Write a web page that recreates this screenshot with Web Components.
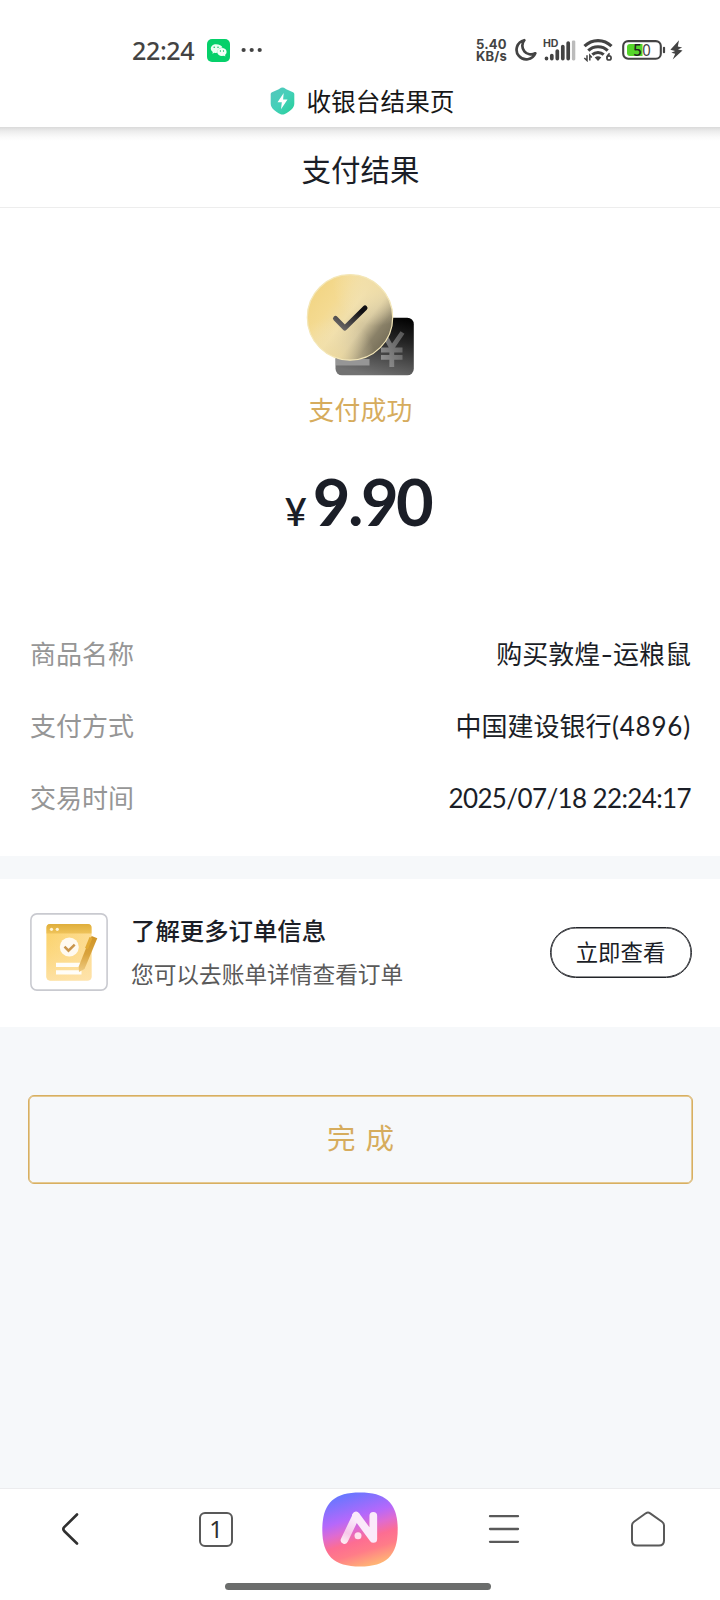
<!DOCTYPE html>
<html lang="zh-CN">
<head>
<meta charset="utf-8">
<title>支付结果</title>
<style>
body{margin:0;background:#f6f8fa;color:#1b1e27;font-family:Lato,"Noto Sans CJK SC",sans-serif}
</style>
</head>
<body>
<pay-screen></pay-screen>
<script>
const define = (name, html) => {
  const t = document.createElement('template');
  t.innerHTML = html;
  customElements.define(name, class extends HTMLElement {
    constructor() {
      super();
      this.attachShadow({ mode: 'open' }).appendChild(t.content.cloneNode(true));
    }
  });
};

define('status-bar', `
<style>
:host{display:flex;align-items:center;height:76px;padding:24px 37px 0 132px;box-sizing:border-box;color:#434343}
svg{display:block;flex:none}
.time{font:500 25px/30px "Noto Sans",sans-serif;width:75px;letter-spacing:-.35px;white-space:nowrap}
.dots{margin-left:11px}
.right{margin-left:auto;display:flex;align-items:center}
.speed{font:700 13px/12.5px Inter,sans-serif;width:38px;letter-spacing:.2px;white-space:nowrap}
.b{font-family:"Noto Sans",sans-serif}
</style>
<span class="time">22:24</span>
<svg width="23" height="23" viewBox="0 0 23 23"><rect width="23" height="23" rx="5" fill="#05d06a"/><path d="M9 5.2c-3 0-5.2 2-5.2 4.400 0 1.400.8 2.600 2 3.400l-.4 1.700 2-1c1 .3 2 .3 3.100.1-.4-3 2-5 5-5C15 6.600 12.200 5.200 9 5.200z" fill="#e9fff2"/><ellipse cx="14.900" cy="12.900" rx="4.700" ry="4" fill="#f4fff8"/><path d="M16 16l2.300 1.500-.3-2.200z" fill="#f4fff8"/><g fill="#05b95d"><circle cx="7.200" cy="8.300" r=".75"/><circle cx="11" cy="8.300" r=".75"/><circle cx="13.400" cy="12" r=".65"/><circle cx="16.500" cy="12" r=".65"/></g></svg>
<svg class="dots" width="22" height="6" viewBox="0 0 22 6" fill="#434343"><circle cx="2.600" cy="3" r="2.100"/><circle cx="10.700" cy="3" r="2.100"/><circle cx="18.700" cy="3" r="2.100"/></svg>
<div class="right">
<div class="speed">5.40<br>KB/s</div>
<svg width="22" height="24" viewBox="0 0 22 24" style="margin-left:1px"><path d="M9.300 2.200A9.700 9.700 0 1 0 20.300 15.300A8.700 8.700 0 0 1 9.300 2.200Z" fill="none" stroke="#434343" stroke-width="2.700" stroke-linejoin="round"/></svg>
<svg width="34" height="24" viewBox="0 0 34 24" style="margin-left:6px"><text x="0" y="9.300" font-family="Inter,sans-serif" font-weight="700" font-size="9.800" fill="#434343" textLength="15.500" lengthAdjust="spacingAndGlyphs">HD</text><g stroke="#434343" stroke-width="3.700" stroke-linecap="round"><path d="M4 20.300v.3M9.300 17.500v3.100M14.800 13v7.600M20.300 8.500v12.100M25.700 5v15.600" transform="translate(-.5 0)"/></g><rect x="28.900" y="2.500" width="3.400" height="19.900" rx="1.300" fill="#bbb"/></svg>
<svg width="30" height="24" viewBox="0 0 30 24" style="margin-left:6px" fill="none" stroke="#434343"><path d="M1.500 8.200C9 .7 21 .7 28.500 8.200" stroke-width="3.100"/><path d="M5.300 12.600C10.500 7.400 19.500 7.400 24.700 12.600" stroke-width="3.100"/><path d="M9.300 16.700C12.500 13.700 17.500 13.700 20.700 16.700" stroke-width="3"/><path d="M11.700 19.500Q15 16.900 18.300 19.500L15 22.900Z" fill="#434343" stroke="none"/><path d="M4 17.200v5.300L1.300 20M6.800 22.500v-5.300l2 2.300" stroke-width="1.500"/><circle cx="26" cy="19.900" r="2.100" stroke-width="1.700"/><path d="M24 19.400Q24.300 17.200 26.600 15.300" stroke-width="1.700"/></svg>
<svg width="44" height="24" viewBox="0 0 44 24" style="margin-left:9px"><rect x="1.200" y="3.100" width="37.600" height="17.600" rx="5" fill="#fff" stroke="#434343" stroke-width="2.100"/><path d="M8 6h12.500v12H8a3 3 0 0 1-3-3V9a3 3 0 0 1 3-3z" fill="#55d42b"/><path d="M42 9.800v4.400" stroke="#434343" stroke-width="2.200" stroke-linecap="round"/><text class="b" x="11.200" y="17.600" font-size="15.500" font-weight="500" fill="#222" textLength="8.500" lengthAdjust="spacingAndGlyphs">5</text><text class="b" x="20.300" y="17.600" font-size="15.500" fill="#434343" textLength="8.500" lengthAdjust="spacingAndGlyphs">0</text></svg>
<svg width="13" height="20" viewBox="0 0 13 20" style="margin-left:4px"><path d="M9 .2L.4 9.700l4.700 1.200L1.400 12.700l3.800 1.100-2.500 5.800L12.500 10.600l-4.500-1 4.100-2.200-4.300-.9z" fill="#434343"/></svg>
</div>`);

define('browser-title', `
<style>
:host{display:flex;justify-content:center;align-items:center;height:51px;box-sizing:border-box;gap:11px;font-size:24.700px;line-height:30px;color:#171717;margin-left:5px}
svg{display:block;margin-top:-1px}
</style>
<svg width="25" height="28" viewBox="0 0 25 28"><defs><linearGradient id="g" x1="0" x2="1" y1="0" y2="1"><stop stop-color="#55c6bd"/><stop offset=".5" stop-color="#44d0b9"/><stop offset="1" stop-color="#24cf96"/></linearGradient></defs><path d="M11 .8Q12.500 0 14 .8C17 2.800 20 4.300 23 5.200Q24.300 5.700 24.300 7V16.500C24.300 21 20 24.500 14.300 27.200Q12.500 28 10.700 27.200C5 24.500.7 21 .7 16.500V7Q.7 5.700 2 5.200C5 4.300 8 2.800 11 .8Z" fill="url(#g)"/><path d="M13.700 5.900L7.500 15.300h4.300l-.8 6.900 6.500-9.600h-4.400z" fill="#fff"/></svg>
<slot></slot>`);

define('page-title', `
<style>
:host{display:flex;justify-content:center;align-items:center;height:81px;box-sizing:border-box;padding:2px 0 0 1px;border-bottom:1px solid #ededed;font-size:29.500px;color:#1b1e27;background:linear-gradient(#dadada,#ececec 4px,#fafafa 10px,#fff 14px)}
</style><slot></slot>`);

define('success-art', `
<style>:host{display:block;width:110px;height:106px}svg{display:block}</style>
<svg width="110" height="106" viewBox="0 0 110 106">
<defs>
<linearGradient id="card" x1=".75" y1="0" x2=".45" y2="1"><stop stop-color="#050505"/><stop offset=".35" stop-color="#242424"/><stop offset="1" stop-color="#727272"/></linearGradient>
<linearGradient id="gold" x1="0" y1=".1" x2="1" y2=".85"><stop stop-color="#f1d37f"/><stop offset=".3" stop-color="#f4da91"/><stop offset=".48" stop-color="#f1dfaa"/><stop offset=".66" stop-color="#d3c59d"/><stop offset=".8" stop-color="#8a8168"/><stop offset="1" stop-color="#6a634f"/></linearGradient>
<radialGradient id="sheen" cx=".3" cy="1" r=".5"><stop stop-color="#f0db9e" stop-opacity=".9"/><stop offset="1" stop-color="#f5e7bd" stop-opacity="0"/></radialGradient>
<radialGradient id="top" cx=".8" cy=".1" r=".5"><stop stop-color="#f0dda6"/><stop offset="1" stop-color="#f5e7bd" stop-opacity="0"/></radialGradient>
<linearGradient id="tick" x1="1" y1="0" x2="0" y2="1"><stop offset=".15" stop-color="#100f12"/><stop offset="1" stop-color="#74706f"/></linearGradient>
<linearGradient id="yen" x1="1" y1="0" x2="0" y2="1"><stop stop-color="#585858"/><stop offset="1" stop-color="#979797"/></linearGradient>
</defs>
<rect x="29.500" y="44.700" width="78.300" height="57.600" rx="6.500" fill="url(#card)"/>
<path d="M30 86h33.500v6.500H30z" fill="#969696"/>
<path d="M77 59.500L85.800 75L96.500 59.500M85.800 75v19M75 77h21.500M75 84.300h21.500" stroke="url(#yen)" stroke-width="4.800" fill="none"/>
<g><circle cx="44" cy="44.400" r="42.900" fill="url(#gold)"/><circle cx="44" cy="44.400" r="42.900" fill="url(#sheen)"/><circle cx="44" cy="44.400" r="42.900" fill="url(#top)"/></g>
<circle cx="44" cy="44.400" r="42.700" fill="none" stroke="#f4e7b8" stroke-width="1.200"/>
<path d="M29.500 45.500L38.800 55L59 35" fill="none" stroke="url(#tick)" stroke-width="5" stroke-linecap="round" stroke-linejoin="round"/>
</svg>`);

define('pay-result', `
<style>
:host{display:flex;flex-direction:column;align-items:center;height:410px;box-sizing:border-box;padding-top:65px;background:#fff}
success-art{margin-left:2px}
.state{font-size:25.800px;line-height:36px;color:#d6ac5d;margin-top:13px;letter-spacing:.2px;margin-left:1px}
.amount{display:flex;align-items:baseline;margin-top:33px;line-height:80px;height:80px;font-weight:700;color:#1b1e27;margin-right:7px}
.yen{font-size:38px;font-weight:600;margin-right:6px}
.num{font-size:65px;letter-spacing:-2.500px;margin-right:-3px}
</style>
<success-art></success-art>
<div class="state"><slot name="state"></slot></div>
<div class="amount"><span class="yen">¥</span><span class="num"><slot></slot></span></div>`);

define('info-row', `
<style>
:host{display:flex;justify-content:space-between;align-items:center;height:71.700px;padding:0 29px 0 30px;font-size:26px;line-height:36px;color:#1b1e27}
.label{color:#969696}
</style>
<span class="label"><slot name="label"></slot></span><span><slot></slot></span>`);

define('info-list', `
<style>:host{display:block;height:238px;box-sizing:border-box;background:#fff}
::slotted(info-row.date){letter-spacing:-.62px;padding-top:1px}
</style><slot></slot>`);

define('wide-run', `
<style>:host{letter-spacing:.8px;margin-left:-7px}:host([dash]){display:inline-block;transform:scaleX(1.300);margin:0 1.500px;letter-spacing:0}</style><slot></slot>`);

define('order-card', `
<style>
:host{display:flex;align-items:flex-start;height:148px;box-sizing:border-box;padding:34px 28px 0 30px;margin-top:23px;background:#fff}
.box{flex:none;width:78px;height:78px}
svg{display:block}
.txt{margin-left:23px}
.t{font-size:24.400px;line-height:36px;font-weight:500;color:#1b1e27}
.s{font-size:22.700px;line-height:34px;margin-top:9px;color:#5a5a5a}
.btn{margin:14px 0 0 auto;width:142px;height:51px;box-sizing:border-box;border:1px solid #222429;box-shadow:inset 0 0 0 .6px #222429;border-radius:26px;display:flex;align-items:center;justify-content:center;font-size:22.400px;line-height:30px;padding:0 1px 0 0}
</style>
<svg class="box" width="78" height="78" viewBox="0 0 78 78">
<defs><linearGradient id="p" x1="0" y1="0" x2="1" y2=".1"><stop stop-color="#fbd269"/><stop offset="1" stop-color="#fee1a6"/></linearGradient>
<linearGradient id="f" x1="0" y1="0" x2="0" y2="1"><stop stop-color="#fbd269" stop-opacity=".3"/><stop offset="1" stop-color="#fee3ac" stop-opacity=".85"/></linearGradient>
<linearGradient id="h" x1="0" y1="0" x2="0" y2="1"><stop stop-color="#dfae3b"/><stop offset="1" stop-color="#efc35a"/></linearGradient>
<linearGradient id="n" x1="0" y1="0" x2="0" y2="1"><stop stop-color="#cf9427"/><stop offset=".5" stop-color="#d9a33c"/><stop offset="1" stop-color="#efcb82"/></linearGradient></defs>
<rect x=".9" y=".9" width="76.200" height="76.200" rx="6" fill="#fff" stroke="#c9cad0" stroke-width="1.600"/>
<rect x="16.500" y="11" width="45" height="56.500" rx="4" fill="url(#p)"/><rect x="16.500" y="11" width="45" height="56.500" rx="4" fill="url(#f)"/>
<path d="M16.500 20.500V14.500a3.500 3.500 0 0 1 3.500-3.500h38a3.500 3.500 0 0 1 3.500 3.500V20.500z" fill="url(#h)"/>
<circle cx="21.500" cy="16.300" r="1.600" fill="#fff4d5"/><circle cx="27.300" cy="16.300" r="1.600" fill="#fff4d5"/>
<circle cx="39.300" cy="34" r="9.500" fill="#fffaf0"/><path d="M34.500 33.700l4 4 6.200-6" fill="none" stroke="#c9954c" stroke-width="2.500"/>
<path d="M26 49.700h26v4.200H26zM26 57.200h25.500v4.200H26z" fill="#fffdf8"/>
<path d="M61.700 23l5.600 2.200L54.500 56l-5.500 3-.3-5.500 7-17.500z" fill="url(#n)"/><path d="M61 24.500l-4.500 11" stroke="#e2aa35" stroke-width="3.200"/>
</svg>
<div class="txt"><div class="t"><slot name="title"></slot></div><div class="s"><slot></slot></div></div>
<div class="btn"><slot name="action"></slot></div>`);

define('done-button', `
<style>:host{display:flex;align-items:center;justify-content:center;height:89px;box-sizing:border-box;margin:68px 27px 0 28px;border:1px solid #d8af61;box-shadow:inset 0 0 0 .7px #dfb96f;border-radius:6px;padding-bottom:6px;font-size:28.500px;color:#d6ac5d;letter-spacing:10px;text-indent:10px}</style><slot></slot>`);

define('bottom-nav', `
<style>
:host{display:grid;grid-template-rows:82px 30px;height:112px;box-sizing:border-box;border-top:1px solid #ececee;background:#fff}
.tabs{display:grid;grid-template-columns:repeat(5,1fr);align-items:center;justify-items:center;height:80px;box-sizing:border-box}
svg{display:block}
.one{width:34px;height:35px;box-sizing:border-box;border:2px solid #595959;border-radius:6px;font:400 24px/30px "Noto Sans",sans-serif;text-align:center;color:#303030}
.bar{width:266px;height:7px;border-radius:4px;background:#6b6d6c;justify-self:center;margin:12px 4px 0 0}
</style>
<div class="tabs">
<svg width="20" height="34" viewBox="0 0 20 34" style="margin-right:4px"><path d="M17 2.500L4.200 15.200Q2.500 17 4.200 19L17 31.500" fill="none" stroke="#303030" stroke-width="2.600" stroke-linecap="round"/></svg>
<div class="one">1</div>
<svg width="76" height="75" viewBox="0 0 76 75"><defs>
<linearGradient id="a" x1=".28" y1="0" x2=".6" y2="1"><stop offset=".02" stop-color="#6677ff"/><stop offset=".35" stop-color="#b568fb"/><stop offset=".5" stop-color="#df6bd0"/><stop offset=".65" stop-color="#fd6d92"/><stop offset=".8" stop-color="#ff7c88"/><stop offset="1" stop-color="#ffb475"/></linearGradient>
<linearGradient id="l" gradientUnits="userSpaceOnUse" x1="36" y1="22" x2="22" y2="50"><stop offset=".2" stop-color="#fbeafa"/><stop offset=".7" stop-color="#fbd9ef" stop-opacity=".85"/><stop offset="1" stop-color="#fff" stop-opacity=".85"/></linearGradient></defs>
<path d="M38 .5C64 .5 75.700 11 75.700 37.500S64 74.500 38 74.500S.3 64 .3 37.500S12 .5 38 .5Z" fill="url(#a)"/>
<path d="M22.500 48L34 24" stroke="url(#l)" stroke-width="7.500" stroke-linecap="round" fill="none"/>
<path d="M51.300 23.800V47L34 23.500" stroke="#fbeafa" stroke-width="7.700" stroke-linecap="round" stroke-linejoin="round" fill="none"/>
<circle cx="36" cy="43.800" r="3.500" fill="#ffe1ed"/></svg>
<svg width="32" height="30" viewBox="0 0 32 30"><path d="M2 2.200h28M2 15h28M2 27.800h28" stroke="#595959" stroke-width="2.300" stroke-linecap="round"/></svg>
<svg width="34" height="36" viewBox="0 0 34 36"><path d="M14.800 2.300Q17 .8 19.200 2.300L31 10.700Q33 12.200 33 14.200V29.500Q33 34.500 28 34.500H6Q1 34.500 1 29.500V14.200Q1 12.200 3 10.700Z" fill="none" stroke="#595959" stroke-width="2"/></svg>
</div>
<div class="bar"></div>`);

define('pay-screen', `
<style>
:host{display:flex;flex-direction:column;width:720px;height:1600px;background:#f6f8fa;overflow:hidden}
.top{background:#fff}
bottom-nav{margin-top:auto}
</style>
<div class="top"><status-bar></status-bar><browser-title>收银台结果页</browser-title></div>
<page-title>支付结果</page-title>
<pay-result><span slot="state">支付成功</span>9.90</pay-result>
<info-list>
<info-row><span slot="label">商品名称</span>购买敦煌<wide-run dash>-</wide-run>运粮鼠</info-row>
<info-row><span slot="label">支付方式</span>中国建设银行<wide-run>(4896)</wide-run></info-row>
<info-row class="date"><span slot="label" style="letter-spacing:0">交易时间</span>2025/07/18 22:24:17</info-row>
</info-list>
<order-card><span slot="title">了解更多订单信息</span>您可以去账单详情查看订单<span slot="action">立即查看</span></order-card>
<done-button>完成</done-button>
<bottom-nav></bottom-nav>`);
</script>
</body>
</html>
